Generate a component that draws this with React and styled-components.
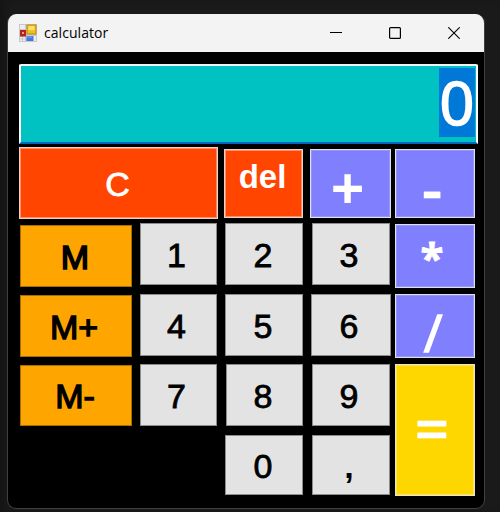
import React from "react";
import styled, { createGlobalStyle } from "styled-components";

const GlobalStyle = createGlobalStyle`
  * { box-sizing: border-box; }
  body { margin: 0; background: #1a1a1a; overflow: hidden; }
`;

const Desktop = styled.main`
  width: 500px;
  height: 512px;
  padding: 14px 0 0 7px;
  background: #1a1a1a;
  box-shadow: inset 8px 0 8px -4px #141414;
`;

const Window = styled.section`
  width: 478px;
  height: 495px;
  border: 1px solid #404040;
  border-top: 0;
  border-radius: 9px;
  background: #000;
  overflow: hidden;
`;

const TitleBar = styled.header`
  display: flex;
  align-items: center;
  height: 38px;
  padding-left: 11px;
  background: #f3f3f3;
  color: #000;
`;

const Title = styled.h1`
  flex: 1;
  margin: 0 0 0 7px;
  font: 400 14px/20px "Open Sans", "Noto Sans", sans-serif;
  letter-spacing: 0.05px;
`;

const Controls = styled.div`
  display: flex;
  gap: 47px;
  margin-right: 24px;
  svg { display: block; }
`;

const Display = styled.output`
  display: flex;
  justify-content: flex-end;
  width: 459px;
  height: 80px;
  margin: 12px 0 0 11px;
  padding: 2px 1px 0 0;
  border: 2px solid #fff;
  border-top-color: #f0f4f4;
  border-bottom: 2px solid #0067c0;
  border-radius: 2px 2px 0 0;
  background: #00c2c2;
`;

const Selection = styled.span`
  width: 36px;
  height: 69px;
  background: #0078d7;
  color: #fff;
  font: 400 61px/67px "Open Sans", "Noto Sans", sans-serif;
  -webkit-text-stroke: 1.7px currentColor;
  text-align: center;
`;

const Keypad = styled.div`
  display: grid;
  grid-template-columns: 120px 84px 87px 84px 82px;
  grid-template-rows: 76px 71px 70px 71px 61px;
  margin: 3px 0 0 11px;
`;

const KeyBase = styled.button`
  display: flex;
  align-items: center;
  justify-content: center;
  grid-area: ${(p) => p.$area};
  margin: ${(p) => p.$gap};
  padding: 0;
  border-radius: 0;
`;

const DigitKey = styled(KeyBase)`
  border: 1px solid #8c8c8c;
  background: #e3e3e3;
  color: #000;
`;

const MemoryKey = styled(KeyBase)`
  border: 1px solid #a96e00;
  background: #ffa500;
  color: #000;
`;

const ClearKey = styled(KeyBase)`
  border: 1px solid #e8d4cc;
  background: #ff4500;
  color: #fff;
  box-shadow: inset 0 0 0 1px #ff8a60;
`;

const OperatorKey = styled(KeyBase)`
  border: 1px solid #e0e0ec;
  background: #8080ff;
  color: #fff;
  box-shadow: inset 0 0 0 1px #9494ff;
`;

const EqualsKey = styled(OperatorKey)`
  border-color: #e8e4cc;
  background: #ffd700;
  box-shadow: inset 0 0 0 1px #ffe14c;
`;

const Label = styled.span`
  font: ${(p) => p.$weight || 400} ${(p) => p.$size || 34}px/${(p) => (p.$humanist ? 0.8 : 1)}
    ${(p) => (p.$humanist ? '"Open Sans", "Noto Sans"' : '"Liberation Sans", Arial')}, sans-serif;
  -webkit-text-stroke: ${(p) => p.$stroke ?? 0.8}px currentColor;
  transform: translate(${(p) => p.$x || 0}px, ${(p) => p.$y || 0}px);
  white-space: nowrap;
`;

const keys = [
  { text: "C", kind: ClearKey, area: "1 / 1 / 2 / 3", gap: "0 5px 4px 0", y: 1, x: -1 },
  { text: "del", kind: ClearKey, area: "1 / 3", gap: "2px 7px 5px 1px", weight: 700, size: 33, y: -7, x: -1, stroke: 0 },
  { text: "+", kind: OperatorKey, area: "1 / 4", gap: "2px 3px 5px 0", weight: 700, size: 59, humanist: true, x: -3, y: 4, stroke: 0 },
  { text: "-", kind: OperatorKey, area: "1 / 5", gap: "2px 1px 5px 1px", weight: 600, size: 64, humanist: true, x: -3, y: 4, stroke: 0.3 },
  { text: "M", kind: MemoryKey, area: "2 / 1", gap: "2px 7px 7px 1px", stroke: 1.6, y: 1, x: -1 },
  { text: "1", kind: DigitKey, area: "2 / 2", gap: "0 6px 9px 1px", x: -2, y: 1 },
  { text: "2", kind: DigitKey, area: "2 / 3", gap: "0 7px 9px 2px", x: -1, y: 1 },
  { text: "3", kind: DigitKey, area: "2 / 4", gap: "0 4px 9px 2px", x: -2, y: 1 },
  { text: "*", kind: OperatorKey, area: "2 / 5", gap: "1px 1px 6px 1px", weight: 700, size: 42, humanist: true, x: -3, y: 1, stroke: 0.8 },
  { text: "M+", kind: MemoryKey, area: "3 / 1", gap: "1px 7px 7px 1px", stroke: 1.4, y: 1, x: -2 },
  { text: "4", kind: DigitKey, area: "3 / 2", gap: "0 6px 8px 1px", x: -2, y: 1 },
  { text: "5", kind: DigitKey, area: "3 / 3", gap: "0 7px 8px 2px", x: -1, y: 1 },
  { text: "6", kind: DigitKey, area: "3 / 4", gap: "0 3px 8px 1px", x: -2, y: 1 },
  { text: "/", kind: OperatorKey, area: "3 / 5", gap: "0 1px 6px 1px", weight: 400, size: 51, humanist: true, x: -2, y: 6, stroke: 1.5 },
  { text: "M-", kind: MemoryKey, area: "4 / 1", gap: "1px 7px 9px 1px", stroke: 1.4, y: 0, x: -1 },
  { text: "7", kind: DigitKey, area: "4 / 2", gap: "0 6px 9px 1px", x: -2, y: 1 },
  { text: "8", kind: DigitKey, area: "4 / 3", gap: "0 7px 9px 3px", x: -1.5, y: 1 },
  { text: "9", kind: DigitKey, area: "4 / 4", gap: "0 4px 9px 2px", x: -2, y: 1 },
  { text: "=", kind: EqualsKey, area: "4 / 5 / 6 / 6", gap: "0 1px 0 1px", weight: 600, size: 60, humanist: true, x: -3, y: -2, stroke: 0.4 },
  { text: "0", kind: DigitKey, area: "5 / 3", gap: "0 7px 1px 2px", x: -1, y: 1 },
  { text: ",", kind: DigitKey, area: "5 / 4", gap: "0 4px 1px 2px", weight: 700, x: -2, y: 1, stroke: 0 },
];

function AppIcon() {
  return (
    <svg width="18" height="18" viewBox="0 0 18 18" aria-hidden="true">
      <rect width="18" height="18" fill="#c9c9cb" />
      <path d="M1 1h5v4H1zM1 13h5v4H1zM14 12h3v5h-3z" fill="#ededee" />
      <path d="M3.5 13v4M1 15h5" stroke="#c9c9cb" />
      <rect x="1" y="6" width="6" height="6.5" fill="#b3261c" />
      <rect x="3" y="8" width="2" height="2" fill="#f19a8c" />
      <rect x="8" y="1" width="9" height="9" fill="#f2be20" stroke="#b88b08" />
      <rect x="9.5" y="2" width="6" height="4" fill="#ffe16a" />
      <rect x="7.5" y="12" width="7" height="5" fill="#4479dc" />
      <path d="M8 13h5" stroke="#7fa9f2" />
    </svg>
  );
}

export default function App() {
  return (
    <>
      <GlobalStyle />
      <Desktop>
        <Window>
          <TitleBar>
            <AppIcon />
            <Title>calculator</Title>
            <Controls>
              <svg width="12" height="12" viewBox="0 0 12 12">
                <path d="M0 5.5h12" stroke="#000" />
              </svg>
              <svg width="12" height="12" viewBox="0 0 12 12">
                <rect x=".6" y=".6" width="10.8" height="10.8" rx="1" fill="none" stroke="#000" strokeWidth="1.2" />
              </svg>
              <svg width="12" height="12" viewBox="0 0 12 12">
                <path d="M.3.3l11.4 11.4M11.7.3L.3 11.7" stroke="#000" strokeWidth="1.1" />
              </svg>
            </Controls>
          </TitleBar>
          <Display>
            <Selection>0</Selection>
          </Display>
          <Keypad>
            {keys.map(({ text, kind: Key, area, gap, weight, size, humanist, stroke, x, y }) => (
              <Key key={text} $area={area} $gap={gap}>
                <Label $weight={weight} $size={size} $humanist={humanist} $stroke={stroke} $x={x} $y={y}>
                  {text}
                </Label>
              </Key>
            ))}
          </Keypad>
        </Window>
      </Desktop>
    </>
  );
}
